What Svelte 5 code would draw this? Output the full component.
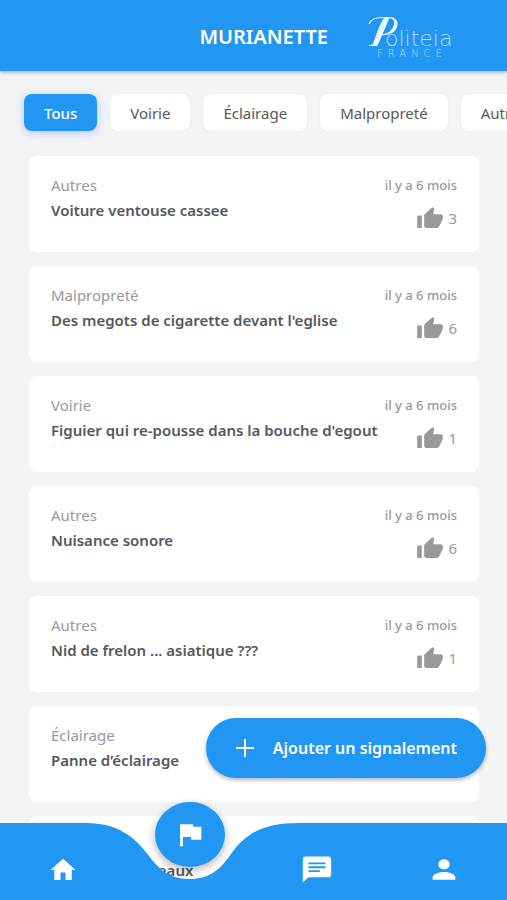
<script>
  const filters = ['Tous', 'Voirie', 'Éclairage', 'Malpropreté', 'Autres'];
  let active = $state('Tous');

  const reports = [
    { category: 'Autres', title: 'Voiture ventouse cassee', likes: 3 },
    { category: 'Malpropreté', title: "Des megots de cigarette devant l'eglise", likes: 6 },
    { category: 'Voirie', title: "Figuier qui re-pousse dans la bouche d'egout", likes: 1 },
    { category: 'Autres', title: 'Nuisance sonore', likes: 6 },
    { category: 'Autres', title: 'Nid de frelon ... asiatique ???', likes: 1 },
    { category: 'Éclairage', title: 'Panne d’éclairage', likes: 2 },
    { category: 'Voirie', title: 'Chute de panneaux', likes: 2 }
  ];
</script>

<div class="app">
  <header>
    <h1>MURIANETTE</h1>
    <svg class="logo" viewBox="0 0 88 46" role="img" aria-label="Politeia France">
      <path class="swash" d="M1 11C3 6 8 4.500 14 4.500h6c6 0 8 3 7.500 7C27 18 22 22 13 21.500" />
      <path d="M16 4.500h6C19 10 16 18 12 27c-1 3-2 4-2 4.500L9 33H1v-1c3 0 4-1 5-4C9 19 12 11 16 4.500z" />
      <path d="M21 4c6 0 9 3 8.500 8C29 18 23 22.500 13 22c7-1 12-5 13-11 .5-4-1-6-5-7z" />
      <text class="name" x="17" y="33">oliteia</text>
      <text class="country" x="9" y="44">FRANCE</text>
    </svg>
  </header>

  <div class="filters">
    {#each filters as filter}
      <button class="chip" class:active={active === filter} onclick={() => (active = filter)}>{filter}</button>
    {/each}
  </div>

  <main>
    {#each reports as report}
      <article>
        <div class="info">
          <p class="category">{report.category}</p>
          <h2>{report.title}</h2>
        </div>
        <div class="meta">
          <time>il y a 6 mois</time>
          <button class="like" aria-label="J'aime">
            <svg viewBox="0 0 24 24" preserveAspectRatio="none" aria-hidden="true">
              <path d="M1 21h4V9H1zM23 10c0-1.100-.9-2-2-2h-6.310l.95-4.570.03-.32c0-.41-.17-.79-.44-1.060L14.170 1 7.590 7.590C7.220 7.950 7 8.450 7 9v10c0 1.100.9 2 2 2h9c.83 0 1.540-.5 1.840-1.220l3.020-7.050c.09-.23.14-.47.14-.73z" />
            </svg>
            <span>{report.likes}</span>
          </button>
        </div>
      </article>
    {/each}
  </main>

  <button class="add">
    <svg viewBox="0 0 20 20" aria-hidden="true"><path d="M10 1v18M1 10h18" /></svg>
    <span>Ajouter un signalement</span>
  </button>

  <nav>
    <svg class="wave" viewBox="0 0 507 77" preserveAspectRatio="none" aria-hidden="true">
      <path d="M0 0H86C118 0 135 14 149 33C161 49 172 56 190 56C209 56 220 47 231 31C245 11 262 0 300 0H507V77H0Z" />
    </svg>
    <a href="#accueil" aria-label="Accueil">
      <svg class="home" viewBox="0 0 24 24" aria-hidden="true"><path d="M10 20v-6h4v6h5v-8h3L12 3 2 12h3v8z" /></svg>
    </a>
    <a href="#signalements" class="current" aria-label="Signalements">
      <span class="bubble">
        <svg viewBox="0 0 24 24" preserveAspectRatio="none" aria-hidden="true"><path d="M14.400 6L14 4H5v17h2v-7h5.600l.4 2h7V6z" /></svg>
      </span>
    </a>
    <a href="#messages" aria-label="Messages">
      <svg viewBox="0 0 24 24" preserveAspectRatio="none" aria-hidden="true"><path d="M20 2H4c-1.100 0-2 .9-2 2v18l4-4h14c1.100 0 2-.9 2-2V4c0-1.100-.9-2-2-2zM6 6.500h12v1.500H6zM14 14H6v-1.500h8zM18 11H6V9.500h12z" /></svg>
    </a>
    <a href="#profil" aria-label="Profil">
      <svg viewBox="0 0 24 24" preserveAspectRatio="none" aria-hidden="true"><path d="M12 12c2.210 0 4-1.790 4-4s-1.790-4-4-4-4 1.790-4 4 1.790 4 4 4zm0 2c-2.670 0-8 1.340-8 4v2h16v-2c0-2.660-5.330-4-8-4z" /></svg>
    </a>
  </nav>
</div>

<style>
  :global(body) {
    margin: 0;
    background: #f2f4f6;
  }

  .app {
    position: relative;
    display: flex;
    flex-direction: column;
    height: 100vh;
    overflow: hidden;
    font-family: 'Noto Sans', 'Open Sans', sans-serif;
    color: #55585c;
  }

  h1, h2, p {
    margin: 0;
  }

  button {
    border: 0;
    font: inherit;
    color: inherit;
    cursor: pointer;
  }

  header {
    flex: none;
    display: flex;
    align-items: center;
    justify-content: flex-end;
    gap: 40px;
    height: 71px;
    padding-right: 51px;
    background: #2196f3;
    color: #fff;
    box-shadow: 0 1px 4px rgba(0, 0, 0, 0.35);
  }

  h1 {
    padding-top: 3px;
    font-size: 20px;
    font-weight: 600;
    line-height: 24px;
  }

  .logo {
    width: 88px;
    height: 46px;
    fill: #e8f6ff;
  }

  .swash {
    fill: none;
    stroke: #e8f6ff;
    stroke-width: 1.2;
  }

  .name, .country {
    font-family: 'DejaVu Sans', sans-serif;
    font-weight: 200;
    fill: #b5dffc;
  }

  .name {
    font-size: 22px;
  }

  .country {
    font-size: 10px;
    letter-spacing: 5px;
  }

  .filters {
    flex: none;
    display: flex;
    gap: 13px;
    padding: 23px 0 24px 24px;
    overflow: hidden;
  }

  .chip {
    flex: none;
    height: 37px;
    padding: 0 20px;
    border-radius: 8px;
    background: #fff;
    font-size: 15px;
    box-shadow: 0 0 2px rgba(40, 60, 90, 0.1);
  }

  .chip.active {
    background: #2196f3;
    color: #fff;
    font-weight: 500;
    box-shadow: 0 2px 8px rgba(33, 100, 243, 0.3);
  }

  main {
    flex: 1;
    min-height: 0;
    display: flex;
    flex-direction: column;
    gap: 14px;
    padding: 1px 28px 0 29px;
    overflow: hidden;
  }

  article {
    flex: none;
    box-sizing: border-box;
    display: flex;
    justify-content: space-between;
    min-height: 96px;
    padding: 17px 22px;
    border-radius: 8px;
    background: #fff;
  }

  .category {
    font-size: 15px;
    line-height: 24px;
    color: #97999c;
  }

  h2 {
    font-size: 15px;
    font-weight: 600;
    line-height: 26px;
    color: #55585c;
  }

  .meta {
    display: flex;
    flex-direction: column;
    align-items: flex-end;
    gap: 8px;
    color: #999;
  }

  time {
    font-size: 13px;
    font-weight: 500;
    line-height: 24px;
  }

  .like {
    display: flex;
    align-items: center;
    gap: 4px;
    padding: 0;
    background: none;
    font-size: 15px;
    line-height: 26px;
  }

  .like svg {
    width: 28px;
    height: 25px;
    fill: #999;
  }

  .add {
    position: absolute;
    right: 21px;
    bottom: 122px;
    display: flex;
    align-items: center;
    gap: 18px;
    height: 60px;
    padding: 0 29px;
    border-radius: 30px;
    background: #2196f3;
    color: #fff;
    font-size: 16px;
    font-weight: 600;
    box-shadow: 0 2px 4px rgba(0, 0, 0, 0.3);
  }

  .add svg {
    width: 20px;
    height: 20px;
    fill: none;
    stroke: #fff;
    stroke-width: 2;
  }

  nav {
    position: absolute;
    inset: auto 0 0;
    display: grid;
    grid-template-columns: repeat(4, 1fr);
    height: 77px;
  }

  .wave {
    position: absolute;
    inset: 0;
    width: 100%;
    height: 100%;
    fill: #2196f3;
  }

  nav a {
    position: relative;
    display: flex;
    align-items: center;
    justify-content: center;
    padding-top: 16px;
  }

  nav a svg {
    width: 34px;
    height: 31px;
    fill: #fff;
  }

  nav a .home {
    width: 30px;
    height: 30px;
  }

  nav .current {
    align-items: flex-start;
    padding: 0;
  }

  .bubble {
    position: absolute;
    top: -21px;
    display: flex;
    align-items: center;
    justify-content: center;
    width: 70px;
    height: 65px;
    border-radius: 50%;
    background: #2196f3;
    box-shadow: 0 3px 8px rgba(0, 0, 0, 0.3);
  }
</style>
